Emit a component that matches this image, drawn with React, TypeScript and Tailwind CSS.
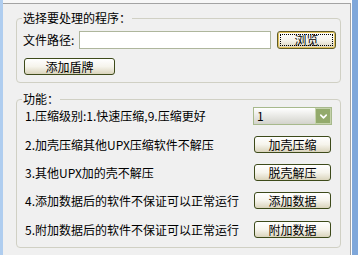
import { ChevronDown } from "lucide-react";

const rows = [
  { text: "2.加壳压缩其他UPX压缩软件不解压", button: "加壳压缩", mt: "mt-[11px]" },
  { text: "3.其他UPX加的壳不解压", button: "脱壳解压", mt: "mt-[11px]" },
  { text: "4.添加数据后的软件不保证可以正常运行", button: "添加数据", mt: "mt-[11px]" },
  { text: "5.附加数据后的软件不保证可以正常运行", button: "附加数据", mt: "mt-[12px]" },
];

const XpButton = ({ children, className = "" }: { children: React.ReactNode; className?: string }) => (
  <button
    className={`flex items-center justify-center rounded-[3px] border border-[#3D4A1A] bg-linear-to-b from-white via-[#F6F4EC] to-[#DAD4BC] text-[12px] leading-none text-black ${className}`}
  >
    {children}
  </button>
);

const App = () => {
  return (
    <div className="flex h-[255px] w-[358px] bg-[#F0F0F0] font-['Noto_Sans_CJK_SC',sans-serif] text-[12px] text-black">
      <div className="w-[3px] bg-[#AFCDEF]" />

      <div className="flex w-[348px] flex-col">
        <div className="h-[3px] bg-[#F7F7F7]" />
        <div className="flex flex-1 flex-col border-t border-r border-[#A3A3A3]">
          {/* 选择程序 */}
          <fieldset className="ml-[13px] mt-[7px] w-[325px] rounded-[4px] border border-[#D0D0C4] pb-[7px] pl-[6px] pr-[4px]">
            <legend className="-ml-[1px] px-[1px] leading-[14px]">选择要处理的程序：</legend>
            <div className="mt-[6px] flex h-[18px] items-center">
              <span className="w-[56px] leading-none">文件路径:</span>
              <input className="h-[18px] w-[192px] border border-[#AEB69C] bg-white outline-none" />
              <XpButton className="ml-[6px] h-[18px] w-[59px] border-[#5E5A26] shadow-[inset_0_0_0_1px_#E3C35C] outline-1 -outline-offset-[4px] outline-dotted outline-black">
                浏览
              </XpButton>
            </div>
            <XpButton className="mt-[9px] ml-[1px] h-[17px] w-[91px]">添加盾牌</XpButton>
          </fieldset>

          {/* 功能 */}
          <fieldset className="ml-[13px] mt-[9px] w-[325px] rounded-[4px] border border-[#D0D0C4] pb-[9px] pl-[8px] pr-[8px]">
            <legend className="-ml-[3px] px-[1px] leading-[14px]">功能：</legend>
            <div className="mt-[1px] flex h-[18px] items-center justify-between">
              <span className="leading-none">1.压缩级别:1.快速压缩,9.压缩更好</span>
              <div className="flex h-[18px] w-[79px] border border-[#A7B98C]">
                <div className="flex flex-1 items-center bg-linear-to-b from-white to-[#D3D3CC] pl-[3px] leading-none">1</div>
                <div className="flex w-[16px] items-center justify-center border border-[#C5D3AB] bg-[#93AA6C]">
                  <ChevronDown size={11} strokeWidth={3.5} color="#ffffff" />
                </div>
              </div>
            </div>
            {rows.map((row) => (
              <div key={row.button} className={`${row.mt} flex h-[17px] items-center justify-between`}>
                <span className="leading-none">{row.text}</span>
                <XpButton className="mr-[1px] h-[17px] w-[77px]">{row.button}</XpButton>
              </div>
            ))}
          </fieldset>
        </div>
      </div>

      <div className="flex w-[7px]">
        <div className="w-[1px] bg-[#FFFFFF]" />
        <div className="flex-1 bg-[#7FA7DA]" />
      </div>
    </div>
  );
};

export default App;
